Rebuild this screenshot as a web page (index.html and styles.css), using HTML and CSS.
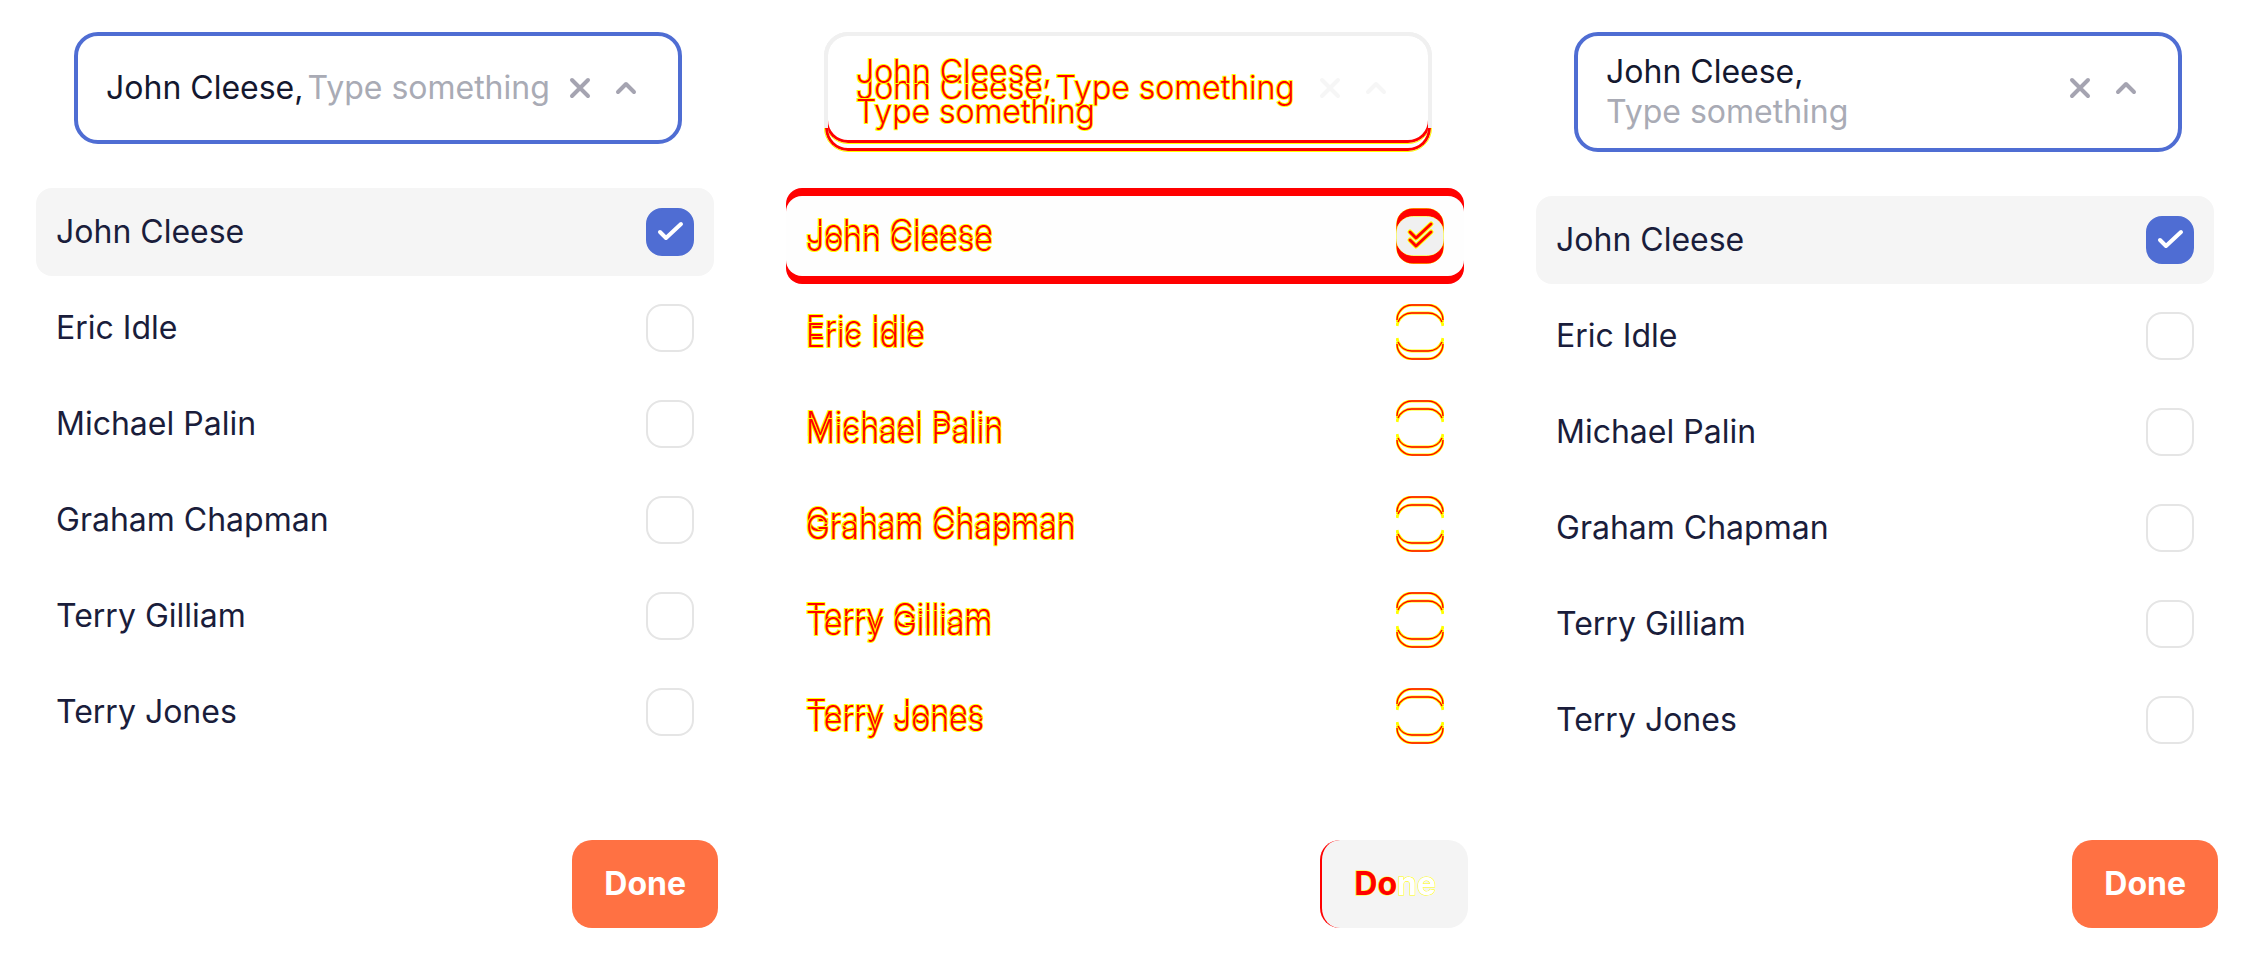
FILE: index.html
```html
<!DOCTYPE html>
<html lang="en">
<head>
<meta charset="utf-8">
<title>Multi-select comparison</title>
<link rel="stylesheet" href="styles.css">
</head>
<body>
<svg class="defs" aria-hidden="true">
  <symbol id="cross" viewBox="0 0 32 32"><path d="M8 8l16 16M24 8L8 24"/></symbol>
  <symbol id="chevron" viewBox="0 0 32 32"><path d="M8 20l8-8 8 8"/></symbol>
  <symbol id="tick" viewBox="0 0 48 48"><path d="M14 24l6 6 15-14"/></symbol>
  <symbol id="ring-diff" viewBox="0 0 48 56">
    <g fill="none" stroke="#ff0" stroke-width="3">
      <path d="M1 18v-2A15 15 0 0 1 16 1h16a15 15 0 0 1 15 15v2M1 22A15 15 0 0 1 16 9h16a15 15 0 0 1 15 13M1 34a15 15 0 0 0 15 13h16a15 15 0 0 0 15-13M1 38v2a15 15 0 0 0 15 15h16a15 15 0 0 0 15-15v-2"/>
    </g>
    <g fill="none" stroke="#f00" stroke-width="1.4">
      <path d="M1 16A15 15 0 0 1 16 1h16a15 15 0 0 1 15 15M2 18A15 15 0 0 1 16 9h16a15 15 0 0 1 14 9M2 38a15 15 0 0 0 14 9h16a15 15 0 0 0 14-9M1 40a15 15 0 0 0 15 15h16a15 15 0 0 0 15-15"/>
    </g>
  </symbol>
  <symbol id="check-diff" viewBox="0 0 48 56">
    <rect x=".5" y=".5" width="47" height="55" rx="16" fill="#f00" stroke="#ff0"/>
    <rect x=".5" y="8.500" width="47" height="39" rx="16" fill="#f0f0f0" stroke="#ff0"/>
    <g fill="none" stroke-linecap="round" stroke-linejoin="round">
      <path d="M14 24l6 6 15-14M14 32l6 6 15-14" stroke="#ff0" stroke-width="5"/>
      <path d="M14 24l6 6 15-14M14 32l6 6 15-14" stroke="#f00" stroke-width="3"/>
    </g>
  </symbol>
</svg>
<main class="board">
  <section class="panel">
    <div class="field">
      <label class="field-text"><span class="value">John Cleese,</span><input class="entry" type="text" placeholder="Type something"></label>
      <div class="tools">
        <button class="tool" type="button" aria-label="Clear"><svg class="icon"><use href="#cross"/></svg></button>
        <button class="tool" type="button" aria-label="Collapse"><svg class="icon"><use href="#chevron"/></svg></button>
      </div>
    </div>
    <div class="options">
      <label class="option selected"><span>John Cleese</span><span class="check"><input class="box" type="checkbox" checked><svg class="tick"><use href="#tick"/></svg></span></label>
      <label class="option"><span>Eric Idle</span><span class="check"><input class="box" type="checkbox"></span></label>
      <label class="option"><span>Michael Palin</span><span class="check"><input class="box" type="checkbox"></span></label>
      <label class="option"><span>Graham Chapman</span><span class="check"><input class="box" type="checkbox"></span></label>
      <label class="option"><span>Terry Gilliam</span><span class="check"><input class="box" type="checkbox"></span></label>
      <label class="option"><span>Terry Jones</span><span class="check"><input class="box" type="checkbox"></span></label>
    </div>
    <button class="done" type="button">Done</button>
  </section>

  <section class="panel diff">
    <div class="stack">
      <div class="field">
        <label class="field-text"><span class="value">John Cleese,</span><input class="entry" type="text" placeholder="Type something"></label>
        <div class="tools">
          <button class="tool" type="button" aria-label="Clear"><svg class="icon"><use href="#cross"/></svg></button>
          <button class="tool" type="button" aria-label="Collapse"><svg class="icon"><use href="#chevron"/></svg></button>
        </div>
      </div>
      <div class="field">
        <label class="field-text wrapped"><span class="value">John Cleese,</span><input class="entry" type="text" placeholder="Type something"></label>
        <div class="tools"></div>
      </div>
    </div>
    <div class="options">
      <label class="option selected"><span class="double"><span>John Cleese</span><span>John Cleese</span></span><span class="check"><input class="box" type="checkbox" checked><svg class="mark"><use href="#check-diff"/></svg></span></label>
      <label class="option"><span class="double"><span>Eric Idle</span><span>Eric Idle</span></span><span class="check"><input class="box" type="checkbox"><svg class="mark"><use href="#ring-diff"/></svg></span></label>
      <label class="option"><span class="double"><span>Michael Palin</span><span>Michael Palin</span></span><span class="check"><input class="box" type="checkbox"><svg class="mark"><use href="#ring-diff"/></svg></span></label>
      <label class="option"><span class="double"><span>Graham Chapman</span><span>Graham Chapman</span></span><span class="check"><input class="box" type="checkbox"><svg class="mark"><use href="#ring-diff"/></svg></span></label>
      <label class="option"><span class="double"><span>Terry Gilliam</span><span>Terry Gilliam</span></span><span class="check"><input class="box" type="checkbox"><svg class="mark"><use href="#ring-diff"/></svg></span></label>
      <label class="option"><span class="double"><span>Terry Jones</span><span>Terry Jones</span></span><span class="check"><input class="box" type="checkbox"><svg class="mark"><use href="#ring-diff"/></svg></span></label>
    </div>
    <button class="done" type="button">Do<span class="same">ne</span></button>
  </section>

  <section class="panel">
    <div class="field">
      <label class="field-text wrapped"><span class="value">John Cleese,</span><input class="entry" type="text" placeholder="Type something"></label>
      <div class="tools">
        <button class="tool" type="button" aria-label="Clear"><svg class="icon"><use href="#cross"/></svg></button>
        <button class="tool" type="button" aria-label="Collapse"><svg class="icon"><use href="#chevron"/></svg></button>
      </div>
    </div>
    <div class="options">
      <label class="option selected"><span>John Cleese</span><span class="check"><input class="box" type="checkbox" checked><svg class="tick"><use href="#tick"/></svg></span></label>
      <label class="option"><span>Eric Idle</span><span class="check"><input class="box" type="checkbox"></span></label>
      <label class="option"><span>Michael Palin</span><span class="check"><input class="box" type="checkbox"></span></label>
      <label class="option"><span>Graham Chapman</span><span class="check"><input class="box" type="checkbox"></span></label>
      <label class="option"><span>Terry Gilliam</span><span class="check"><input class="box" type="checkbox"></span></label>
      <label class="option"><span>Terry Jones</span><span class="check"><input class="box" type="checkbox"></span></label>
    </div>
    <button class="done" type="button">Done</button>
  </section>
</main>
</body>
</html>
```
FILE: styles.css
```css
* {
  box-sizing: border-box;
}

body {
  margin: 0;
  background: #fff;
  color: #1a1d3b;
  font: 400 32px/40px Inter, "Liberation Sans", sans-serif;
}

button,
input {
  margin: 0;
  padding: 0;
  border: 0;
  background: none;
  color: inherit;
  font: inherit;
}

.defs {
  position: absolute;
  width: 0;
  height: 0;
}

.board {
  display: grid;
  grid-template-columns: repeat(3, minmax(0, 1fr));
  min-height: 100vh;
}

.panel {
  display: flex;
  flex-direction: column;
  padding: 32px 0;
}

/* Field */
.field {
  position: relative;
  display: flex;
  align-items: center;
  gap: 8px;
  min-height: 112px;
  margin: 0 68px 0 74px;
  padding: 16px 36px 16px 28px;
  border: 4px solid #4f6dd3;
  border-radius: 24px;
}

.field-text {
  display: flex;
  flex: 1;
  gap: 4px;
  min-width: 0;
}

.field-text.wrapped {
  flex-direction: column;
  gap: 0;
}

.value {
  color: #14182f;
  white-space: nowrap;
}

.entry {
  flex: 1;
  width: 100%;
  min-width: 0;
  height: 40px;
  outline: 0;
}

.wrapped .entry {
  flex: none;
}

.entry::placeholder {
  color: #a9abb5;
  opacity: 1;
}

.tools {
  display: flex;
  align-self: flex-start;
  align-items: center;
  gap: 14px;
  height: 72px;
}

.tool {
  display: grid;
  width: 32px;
  height: 32px;
}

.icon {
  width: 32px;
  height: 32px;
  fill: none;
  stroke: #a5a4b1;
  stroke-width: 4;
  stroke-linecap: round;
  stroke-linejoin: round;
}

/* Options */
.options {
  display: grid;
  gap: 8px;
  margin: 44px 36px 0;
}

.option {
  display: flex;
  align-items: center;
  justify-content: space-between;
  height: 88px;
  padding: 0 20px;
  border-radius: 16px;
}

.option.selected {
  background: #f5f5f5;
}

.check {
  display: grid;
}

.check > * {
  grid-area: 1 / 1;
}

.box {
  appearance: none;
  width: 48px;
  height: 48px;
  border: 2px solid #e5e5e5;
  border-radius: 16px;
  background: #fff;
}

.box:checked {
  border-color: #4f6dd3;
  background: #4f6dd3;
}

.tick {
  width: 48px;
  height: 48px;
  fill: none;
  stroke: #fff;
  stroke-width: 4;
  stroke-linecap: round;
  stroke-linejoin: round;
  pointer-events: none;
}

.done {
  align-self: flex-end;
  height: 88px;
  margin: auto 32px 0 0;
  padding: 0 32px;
  border-radius: 20px;
  background: #ff7143;
  color: #fff;
  font-weight: 700;
}

/* Difference panel: both states are drawn over each other */
.diff {
  color: #f00;
  font-weight: 300;
  paint-order: stroke fill;
  -webkit-text-stroke: 2px #ff0;
}

.stack {
  display: grid;
  align-items: start;
}

.stack > * {
  grid-area: 1 / 1;
}

.diff .field {
  border-color: #f0f0f0;
}

.diff .field::after {
  content: "";
  position: absolute;
  inset: -4px;
  border: 1px solid #ff0;
  border-radius: 24px;
  box-shadow: inset 0 0 0 3px #f00;
  clip-path: inset(calc(100% - 24px) 0 0 0);
  pointer-events: none;
}

.diff .value {
  color: #f00;
}

.diff .entry::placeholder {
  color: #f00;
}

.diff .icon {
  stroke: #f6f6f6;
}

.diff .options {
  gap: 0;
  margin-top: 36px;
}

.diff .option {
  position: relative;
  height: 96px;
}

.diff .option.selected {
  background: #f00;
}

.diff .option.selected::before {
  content: "";
  position: absolute;
  inset: 8px 0;
  border-radius: 16px;
  background: #fefefe;
}

.diff .option > * {
  position: relative;
}

.double {
  display: grid;
  height: 48px;
}

.double > * {
  grid-area: 1 / 1;
}

.double > :last-child {
  align-self: end;
}

.diff .box {
  height: 56px;
  border-color: transparent;
  background: none;
}

.mark {
  width: 48px;
  height: 56px;
  pointer-events: none;
}

.diff .done {
  border-left: 2px solid #f00;
  background: #f4f4f4;
  color: #f00;
  -webkit-text-stroke: 1px #ff0;
}

.diff .same {
  color: #fff;
}
```
